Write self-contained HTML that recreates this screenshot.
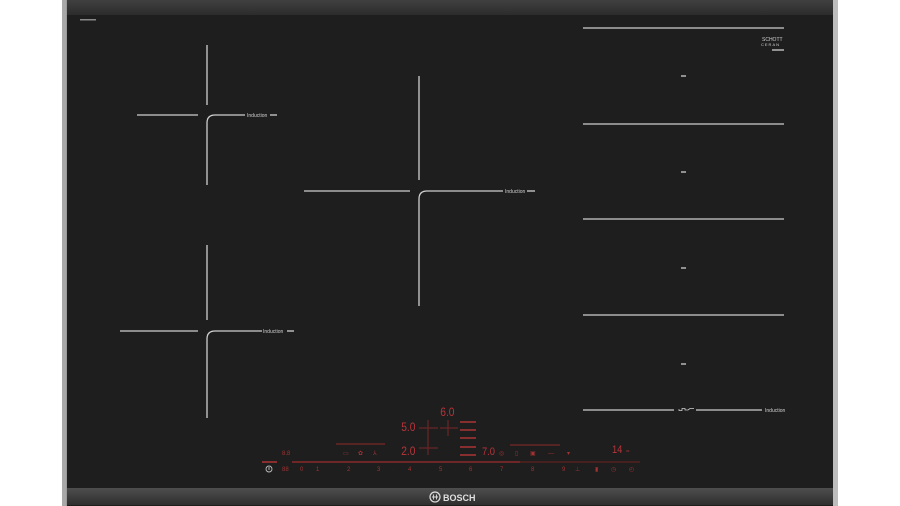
<!DOCTYPE html>
<html><head><meta charset="utf-8"><style>
html,body{margin:0;padding:0;background:#fff;width:900px;height:506px;overflow:hidden}
svg{display:block}
text{font-family:"Liberation Sans",sans-serif}
</style></head><body>
<svg width="900" height="506" viewBox="0 0 900 506" xmlns="http://www.w3.org/2000/svg">
<defs>
<linearGradient id="top" x1="0" y1="0" x2="0" y2="1"><stop offset="0" stop-color="#404040"/><stop offset="1" stop-color="#2c2c2c"/></linearGradient>
<linearGradient id="bot" x1="0" y1="0" x2="0" y2="1"><stop offset="0" stop-color="#4e4e4e"/><stop offset="1" stop-color="#2e2e2e"/></linearGradient>
</defs>
<rect x="62" y="0" width="776" height="506" fill="#9a9a9a"/>
<rect x="67" y="0" width="766" height="506" fill="#1e1e1e"/>
<rect x="67" y="0" width="766" height="15" fill="url(#top)"/>
<rect x="67" y="488" width="766" height="17" fill="url(#bot)"/>
<rect x="833" y="0" width="5" height="506" fill="#bdbdbd"/>
<rect x="62" y="0" width="4" height="506" fill="#a8a8a8"/>
<rect x="80" y="19" width="16" height="1.5" fill="#888"/>
<g stroke="#cfcfcf" stroke-width="1.3" fill="none">
<line x1="207" y1="45" x2="207" y2="105"/><line x1="137" y1="115" x2="198" y2="115"/>
<path d="M207 185 V123 Q207 115 215 115 H245"/><line x1="270" y1="115" x2="277" y2="115"/>
<line x1="207" y1="245" x2="207" y2="320"/><line x1="120" y1="331" x2="198" y2="331"/>
<path d="M207 418 V339 Q207 331 215 331 H262"/><line x1="287" y1="331" x2="294" y2="331"/>
<line x1="419" y1="76" x2="419" y2="180"/><line x1="304" y1="191" x2="410" y2="191"/>
<path d="M419 306 V199 Q419 191 427 191 H503"/><line x1="527" y1="191" x2="535" y2="191"/>
<line x1="583" y1="28" x2="784" y2="28"/><line x1="583" y1="124" x2="784" y2="124"/>
<line x1="583" y1="219" x2="784" y2="219"/><line x1="583" y1="315" x2="784" y2="315"/>
<line x1="583" y1="410" x2="674" y2="410"/><line x1="696" y1="410" x2="762" y2="410"/>
<line x1="681" y1="76" x2="686" y2="76"/><line x1="681" y1="172" x2="686" y2="172"/>
<line x1="681" y1="268" x2="686" y2="268"/><line x1="681" y1="364" x2="686" y2="364"/>
<line x1="772" y1="50" x2="784" y2="50"/>
<path d="M679 409 v1.5 h3 v-2 h3 v1.5 h3 l2 -1.5 h4" stroke-width="0.8"/>
</g>
<g fill="#d0d0d0" font-size="5">
<text x="247" y="117">Induction</text><text x="263" y="333">Induction</text>
<text x="505" y="193">Induction</text><text x="765" y="412">Induction</text>
<text x="762" y="41" font-size="5">SCHOTT</text><text x="761" y="46" font-size="4" letter-spacing="1">CERAN</text>
</g>
<g fill="#b8343a" font-size="12" transform="scale(0.85,1)">
<text x="518" y="416">6.0</text><text x="472" y="431">5.0</text><text x="472" y="455">2.0</text><text x="567" y="455" font-size="11">7.0</text>
<text x="720" y="453" font-size="11">14</text>
</g>
<g stroke="#6a2424" stroke-width="1.2">
<line x1="428" y1="420" x2="428" y2="455"/><line x1="419" y1="428" x2="438" y2="428"/>
<line x1="448" y1="420" x2="448" y2="436"/><line x1="440" y1="428" x2="458" y2="428"/>
<line x1="419" y1="448" x2="438" y2="448"/>
</g>
<g stroke="#c03636" stroke-width="1.3">
<line x1="460" y1="422" x2="476" y2="422"/><line x1="460" y1="430" x2="476" y2="430"/>
<line x1="460" y1="438" x2="476" y2="438"/><line x1="460" y1="447" x2="476" y2="447"/>
<line x1="460" y1="455" x2="476" y2="455"/>
<line x1="336" y1="444" x2="385" y2="444" stroke="#7a2828"/>
<line x1="510" y1="445" x2="560" y2="445" stroke="#7a2828"/>
<line x1="262" y1="462" x2="277" y2="462"/>
<line x1="292" y1="462" x2="520" y2="462" stroke="#a02c2c"/>
<line x1="520" y1="462" x2="640" y2="462" stroke="#5e2020"/>
</g>
<g fill="#a03232" font-size="6">
<text x="282" y="455">8.8</text>
<text x="343" y="455">▭</text><text x="358" y="455">✿</text><text x="373" y="455">⅄</text>
<text x="499" y="455">◎</text>
<text x="515" y="455">▯</text><text x="530" y="455">▣</text><text x="548" y="455">—</text><text x="567" y="455">▾</text>
<text x="626" y="453">=</text>
<text x="282" y="471">88</text>
<text x="300" y="471">0</text><text x="316" y="471">1</text><text x="347" y="471">2</text><text x="377" y="471">3</text>
<text x="408" y="471">4</text><text x="439" y="471">5</text><text x="469" y="471">6</text><text x="500" y="471">7</text>
<text x="531" y="471">8</text><text x="562" y="471">9</text>
<text x="575" y="471">⊥</text><text x="595" y="471">▮</text><text x="611" y="471">◷</text><text x="629" y="471">◴</text>
</g>
<g fill="#5a2020" font-size="5">
<text x="332" y="471">·</text><text x="362" y="471">·</text><text x="393" y="471">·</text><text x="424" y="471">·</text>
<text x="455" y="471">·</text><text x="485" y="471">·</text><text x="516" y="471">·</text><text x="547" y="471">·</text>
</g>
<circle cx="269" cy="469" r="3" fill="none" stroke="#bbb" stroke-width="0.9"/>
<line x1="269" y1="467" x2="269" y2="470" stroke="#bbb" stroke-width="0.9"/>
<circle cx="435" cy="497" r="5" fill="none" stroke="#ddd" stroke-width="1.2"/>
<path d="M432 497 h6 M433.5 494.5 v5 M436.5 494.5 v5" stroke="#ddd" stroke-width="0.9"/>
<text x="443" y="501" font-size="9" font-weight="bold" fill="#e0e0e0">BOSCH</text>
</svg>
</body></html>
